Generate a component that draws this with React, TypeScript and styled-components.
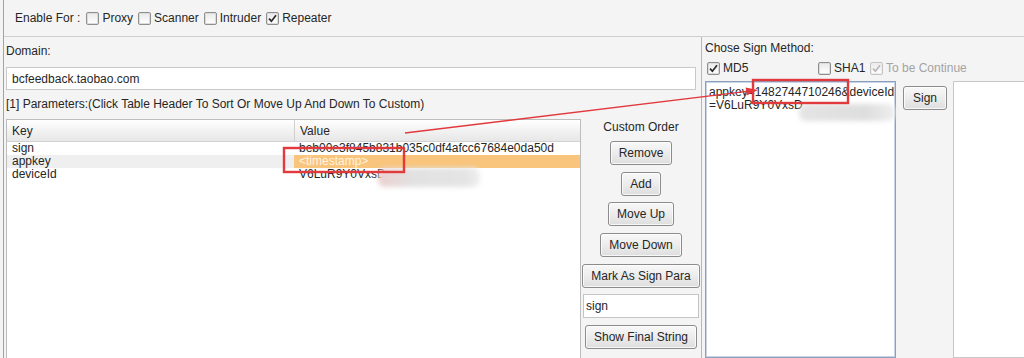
import styled, { createGlobalStyle } from 'styled-components'

const GlobalStyle = createGlobalStyle`
  *, *::before, *::after { box-sizing: border-box; }
  html, body { margin: 0; padding: 0; background: #f4f4f4; }
  body {
    font-family: "Liberation Sans", Arial, sans-serif;
    font-size: 12px;
    color: #262626;
  }
`

const Frame = styled.div`
  position: relative;
  width: 1021px;
  height: 358px;
  margin-left: 3px;
  border-left: 1px solid #a3a3a3;
  display: flex;
  flex-direction: column;
  overflow: hidden;
  background: #f4f4f4;
`

const TopBar = styled.div`
  height: 37px;
  flex-shrink: 0;
  border-bottom: 1px solid #cfcfcf;
  display: flex;
  align-items: center;
  padding-left: 11px;
`

const BarLabel = styled.span`
  margin-right: 6px;
`

const Option = styled.label<{ $width?: number; $disabled?: boolean }>`
  display: flex;
  align-items: center;
  gap: 3px;
  margin-right: 5px;
  color: ${p => (p.$disabled ? '#a3a3a3' : '#262626')};
  ${p => (p.$width ? `width: ${p.$width}px; margin-right: 0;` : '')}
`

const Box = styled.span<{ $disabled?: boolean }>`
  width: 13px;
  height: 13px;
  border: 1px solid ${p => (p.$disabled ? '#c4c4c4' : '#8e8f8f')};
  border-radius: 2px;
  background: linear-gradient(#e9e9e9, #ffffff);
  box-shadow: inset 0 0 0 1px ${p => (p.$disabled ? '#eeeeee' : '#dcdcdc')};
  display: flex;
  align-items: center;
  justify-content: center;
`

function Check({ checked, disabled }: { checked?: boolean; disabled?: boolean }) {
  return (
    <Box $disabled={disabled}>
      {checked && (
        <svg width="9" height="9" viewBox="0 0 9 9">
          <path d="M1 4.6 L3.4 7.2 L8 1.2" fill="none" stroke={disabled ? '#b8b8b8' : '#2a2a2a'} strokeWidth="1.7" />
        </svg>
      )}
    </Box>
  )
}

const Body = styled.div`
  flex: 1;
  min-height: 0;
  display: flex;
`

const LeftPanel = styled.div`
  width: 698px;
  flex-shrink: 0;
  border-right: 1px solid #b8b8b8;
  padding-left: 2px;
  display: flex;
  flex-direction: column;
`

const Label = styled.div<{ $top: number }>`
  line-height: 14px;
  margin-top: ${p => p.$top}px;
  white-space: nowrap;
`

const DomainInput = styled.div`
  margin-top: 9px;
  margin-right: 5px;
  height: 23px;
  background: #fff;
  border: 1px solid #c9c9c9;
  padding-left: 5px;
  display: flex;
  align-items: center;
`

const ParamsRow = styled.div`
  flex: 1;
  margin-top: 8px;
  display: flex;
  min-height: 0;
`

const Table = styled.div`
  width: 575px;
  flex-shrink: 0;
  background: #fff;
  border: 1px solid #bdbdbd;
  border-bottom: none;
`

const HeaderRow = styled.div`
  display: grid;
  grid-template-columns: 287px 1fr;
  height: 22px;
  background: linear-gradient(#ffffff, #f1f1f1 55%, #e7e7e7);
  border-bottom: 1px solid #d2d2d2;
`

const HeaderCell = styled.div`
  display: flex;
  align-items: center;
  padding-left: 5px;
  & + & { border-left: 1px solid #d0d0d0; }
`

const Row = styled.div`
  display: grid;
  grid-template-columns: 287px 1fr;
  height: 13px;
  line-height: 13px;
`

const Cell = styled.div<{ $bg?: string; $light?: boolean }>`
  padding-left: 5px;
  white-space: nowrap;
  overflow: hidden;
  background: ${p => p.$bg || 'transparent'};
  color: ${p => (p.$light ? '#fff3e0' : '#262626')};
`

const OrderColumn = styled.div`
  flex: 1;
  display: flex;
  flex-direction: column;
  align-items: center;
  gap: 6.7px;
`

const OrderTitle = styled.div`
  line-height: 14px;
  margin-top: 1px;
  margin-bottom: 0.3px;
`

const Button = styled.button`
  height: 24px;
  padding: 0 8px;
  font: inherit;
  color: #262626;
  border: 1px solid #8c8c8c;
  border-radius: 3px;
  background: linear-gradient(#f8f8f8, #ececec 50%, #dedede);
  box-shadow: inset 0 0 0 1px rgba(255, 255, 255, 0.75);
  white-space: nowrap;
`

const SignInput = styled.div`
  width: 116px;
  height: 24px;
  background: #fff;
  border: 1px solid #c4c4c4;
  padding-left: 2px;
  display: flex;
  align-items: center;
`

const RightPanel = styled.div`
  flex: 1;
  padding: 4px 0 0 3px;
  display: flex;
  flex-direction: column;
`

const MethodRow = styled.div`
  display: flex;
  align-items: center;
  height: 14px;
  margin-top: 6px;
  padding-left: 2px;
`

const SignRow = styled.div`
  flex: 1;
  margin-top: 6px;
  display: flex;
  align-items: flex-start;
`

const SignText = styled.div`
  width: 191px;
  align-self: stretch;
  background: #fff;
  border: 1px solid #8aa0bd;
  box-shadow: inset 0 0 0 1px #c9d5e6;
  padding: 4px 3px;
  line-height: 13px;
  white-space: pre;
  overflow: hidden;
`

const SignButton = styled(Button)`
  margin: 5px 0 0 7px;
  width: 44px;
  padding: 0;
`

const Output = styled.div`
  flex: 1;
  align-self: stretch;
  margin-left: 6px;
  background: #fff;
  border: 1px solid #c8c8c8;
  border-right: none;
`

const Marks = styled.svg`
  position: absolute;
  left: -4px;
  top: 0;
  pointer-events: none;
`

const Smudge = styled.div<{ $x: number; $y: number; $w: number; $h: number; $tint: string }>`
  position: absolute;
  left: ${p => p.$x - 4}px;
  top: ${p => p.$y}px;
  width: ${p => p.$w}px;
  height: ${p => p.$h}px;
  border-radius: 7px;
  background: ${p => p.$tint};
  filter: blur(2.5px);
  pointer-events: none;
`

const rows = [
  { key: 'sign', value: 'beb00e3f845b831b035c0df4afcc67684e0da50d' },
  { key: 'appkey', value: '<timestamp>', selected: true },
  { key: 'deviceId', value: 'V6LuR9Y0VxsD' },
]

export default function App() {
  return (
    <>
      <GlobalStyle />
      <Frame>
        <TopBar>
          <BarLabel>Enable For :</BarLabel>
          <Option><Check />Proxy</Option>
          <Option><Check />Scanner</Option>
          <Option><Check />Intruder</Option>
          <Option><Check checked />Repeater</Option>
        </TopBar>
        <Body>
          <LeftPanel>
            <Label $top={7}>Domain:</Label>
            <DomainInput>bcfeedback.taobao.com</DomainInput>
            <Label $top={7}>[1] Parameters:(Click Table Header To Sort Or Move Up And Down To Custom)</Label>
            <ParamsRow>
              <Table>
                <HeaderRow>
                  <HeaderCell>Key</HeaderCell>
                  <HeaderCell>Value</HeaderCell>
                </HeaderRow>
                {rows.map(r => (
                  <Row key={r.key}>
                    <Cell $bg={r.selected ? '#efefef' : undefined}>{r.key}</Cell>
                    <Cell $bg={r.selected ? '#f9c57c' : undefined} $light={r.selected}>{r.value}</Cell>
                  </Row>
                ))}
              </Table>
              <OrderColumn>
                <OrderTitle>Custom Order</OrderTitle>
                <Button>Remove</Button>
                <Button>Add</Button>
                <Button>Move Up</Button>
                <Button>Move Down</Button>
                <Button>Mark As Sign Para</Button>
                <SignInput>sign</SignInput>
                <Button>Show Final String</Button>
              </OrderColumn>
            </ParamsRow>
          </LeftPanel>
          <RightPanel>
            <Label $top={0}>Chose Sign Method:</Label>
            <MethodRow>
              <Option $width={111}><Check checked />MD5</Option>
              <Option $width={52}><Check />SHA1</Option>
              <Option $disabled><Check checked disabled />To be Continue</Option>
            </MethodRow>
            <SignRow>
              <SignText>{'appkey=1482744710246&deviceId\n=V6LuR9Y0VxsD'}</SignText>
              <SignButton>Sign</SignButton>
              <Output />
            </SignRow>
          </RightPanel>
        </Body>

        <Smudge $x={378} $y={168} $w={102} $h={19} $tint="linear-gradient(90deg, #ecd0d0, #e2e2e2 35%, #e4e4e4 85%, #efefef)" />
        <Smudge $x={799} $y={104} $w={96} $h={17} $tint="linear-gradient(90deg, #e4e4e4, #dedede 70%, #eeeeee)" />

        <Marks width="1024" height="358" viewBox="0 0 1024 358">
          <rect x="284" y="148" width="120" height="24" fill="none" stroke="#e2393c" strokeWidth="2.4" />
          <rect x="753" y="80" width="95" height="23" fill="none" stroke="#e2393c" strokeWidth="2.4" />
          <line x1="405" y1="133" x2="747" y2="91.4" stroke="#e2393c" strokeWidth="1.4" />
          <polygon points="758,90 746.6,95.4 745.6,87.5" fill="#e2393c" />
        </Marks>
      </Frame>
    </>
  )
}
